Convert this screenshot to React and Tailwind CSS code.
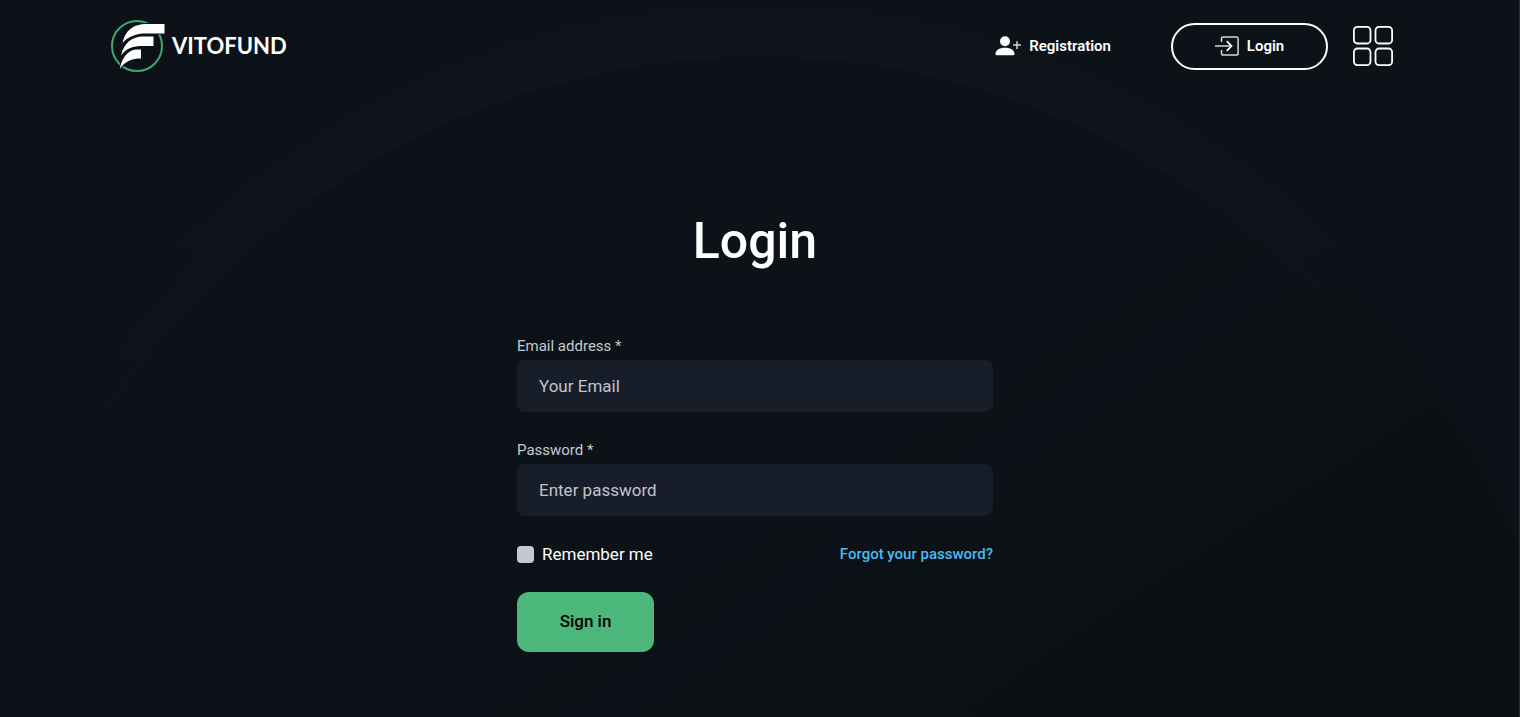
import { useState } from 'react';

function Backdrop() {
  return (
    <div className="pointer-events-none absolute inset-0 overflow-hidden" aria-hidden="true">
      <div className="absolute inset-0 bg-[radial-gradient(circle_at_50%_825px,transparent_767px,rgba(190,210,255,0.018)_769px,transparent_860px)] mask-b-from-20% mask-b-to-80%" />
      <div className="absolute top-[42px] left-1/2 h-[1646px] w-[1646px] -translate-x-1/2 rounded-full bg-[linear-gradient(147deg,transparent_38%,#0c1014_52%)]" />
    </div>
  );
}

function LogoMark() {
  return (
    <svg viewBox="0 0 60 60" className="h-[60px] w-[60px]" aria-hidden="true">
      <circle cx="27" cy="30" r="25" fill="none" stroke="#3fa870" strokeWidth="2" />
      <path
        d="M12.500 27C15 14 24 8 36 8H54.500V17.500H36C26 17.500 19 20 12.500 27Z"
        fill="#fff"
        stroke="#0d1218"
        strokeWidth="2"
        paintOrder="stroke"
      />
      <path
        d="M11 39.500C14 27 22 20.500 33 20.500H43.500V30H33C23 30 16.500 32 11 39.500Z"
        fill="#fff"
        stroke="#0d1218"
        strokeWidth="2"
        paintOrder="stroke"
      />
      <path
        d="M9.800 53C12 41.500 18 33.500 27 33.500H31V42.500C22 42.500 15 45 9.800 53Z"
        fill="#fff"
        stroke="#0d1218"
        strokeWidth="2"
        paintOrder="stroke"
      />
    </svg>
  );
}

function UserPlusIcon() {
  return (
    <svg viewBox="0 0 26 20" className="h-5 w-[26px]" aria-hidden="true">
      <circle cx="10" cy="5.300" r="5" fill="#fff" />
      <path d="M0.500 18C0.500 14.500 4 11.800 10 11.800S19.500 14.500 19.500 18Q19.500 19.200 18.300 19.200H1.700Q0.500 19.200 0.500 18Z" fill="#fff" />
      <path d="M22 5.200V13M18.100 9.100H25.900" stroke="#d5d7da" strokeWidth="1.500" />
    </svg>
  );
}

function EnterIcon() {
  return (
    <svg viewBox="0 0 24 20" className="h-5 w-6" fill="none" stroke="#d5d7da" strokeWidth="1.500" aria-hidden="true">
      <path d="M6.500 6V2.800Q6.500 0.900 8.400 0.900H21.200Q23.100 0.900 23.100 2.800V17.200Q23.100 19.100 21.200 19.100H8.400Q6.500 19.100 6.500 17.200V14" />
      <path d="M0 10H16" />
      <path d="M11.800 5.200L16.500 10L11.800 14.800" stroke="#fff" strokeWidth="1.700" />
    </svg>
  );
}

function GridIcon() {
  return (
    <svg viewBox="0 0 40 40" className="h-10 w-10" fill="none" stroke="#fff" strokeWidth="1.800" aria-hidden="true">
      <rect x="0.900" y="0.900" width="16.600" height="16.600" rx="3.500" />
      <rect x="22.500" y="0.900" width="16.600" height="16.600" rx="3.500" />
      <rect x="0.900" y="22.500" width="16.600" height="16.600" rx="3.500" />
      <rect x="22.500" y="22.500" width="16.600" height="16.600" rx="3.500" />
    </svg>
  );
}

export default function App() {
  const [email, setEmail] = useState('');
  const [password, setPassword] = useState('');
  const [remember, setRemember] = useState(false);

  function handleSubmit(e) {
    e.preventDefault();
  }

  return (
    <div className="relative min-h-screen border-r border-[#2a2d31] bg-[#0d1218] pr-[9px] font-['Roboto',sans-serif] text-white">
      <Backdrop />

      <header className="relative mx-auto flex w-full max-w-[1350px] items-center justify-between py-4 pr-[37px] pl-[30px]">
        <a href="#" className="flex items-center gap-[2px]">
          <LogoMark />
          <span className="font-['Lato',sans-serif] text-[22px] leading-none font-bold">VITOFUND</span>
        </a>

        <nav className="flex items-center">
          <a href="#" className="mr-[60px] flex items-center gap-2 text-[15px] font-semibold">
            <UserPlusIcon />
            Registration
          </a>
          <a
            href="#"
            className="mr-[25px] flex h-[47px] w-[157px] items-center justify-center gap-2 rounded-full border-2 border-white text-[15px] font-semibold"
          >
            <EnterIcon />
            Login
          </a>
          <button type="button" aria-label="Menu">
            <GridIcon />
          </button>
        </nav>
      </header>

      <main className="relative mx-auto w-full max-w-[476px] pt-[119px] pb-16">
        <h1 className="text-center text-[50px] leading-[60px] font-medium">Login</h1>

        <form onSubmit={handleSubmit} className="mt-[65px]">
          <div className="mb-7">
            <label htmlFor="email" className="mb-1 block text-[15px] leading-5 text-[#c5c8d0]">
              Email address *
            </label>
            <input
              id="email"
              type="email"
              value={email}
              onChange={(e) => setEmail(e.target.value)}
              placeholder="Your Email"
              className="block h-[52px] w-full rounded-lg bg-[#181e29] px-[22px] text-[17px] outline-none placeholder:text-[#c0c3cc]"
            />
          </div>

          <div className="mb-7">
            <label htmlFor="password" className="mb-1 block text-[15px] leading-5 text-[#c5c8d0]">
              Password *
            </label>
            <input
              id="password"
              type="password"
              value={password}
              onChange={(e) => setPassword(e.target.value)}
              placeholder="Enter password"
              className="block h-[52px] w-full rounded-lg bg-[#181e29] px-[22px] text-[17px] outline-none placeholder:text-[#c0c3cc]"
            />
          </div>

          <div className="mb-7 flex items-center justify-between">
            <label className="flex items-center gap-2 text-[17px] leading-5">
              <input
                type="checkbox"
                checked={remember}
                onChange={(e) => setRemember(e.target.checked)}
                className="h-[17px] w-[17px] appearance-none rounded-[4px] bg-[#c5c8d3] checked:bg-[#4bb77b]"
              />
              Remember me
            </label>
            <a href="#" className="text-[15px] leading-5 font-medium text-[#45bdf2]">
              Forgot your password?
            </a>
          </div>

          <button
            type="submit"
            className="h-[60px] w-[137px] rounded-xl bg-[#4bb77b] text-[17px] font-medium text-black"
          >
            Sign in
          </button>
        </form>
      </main>
    </div>
  );
}
